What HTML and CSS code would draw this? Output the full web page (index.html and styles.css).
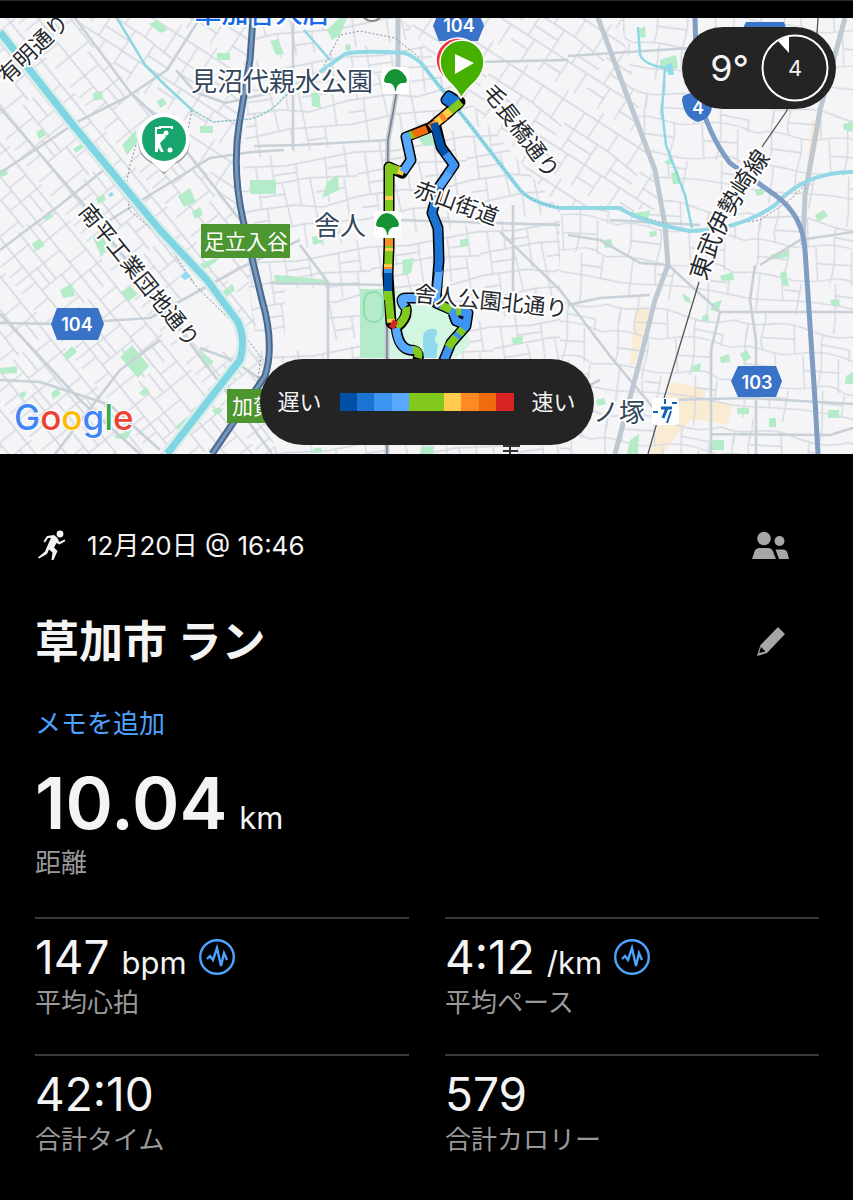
FILE: index.html
```html
<!DOCTYPE html>
<html lang="ja">
<head>
<meta charset="utf-8">
<meta name="viewport" content="width=device-width, initial-scale=1">
<title>草加市 ラン</title>
<link rel="stylesheet" href="styles.css">
</head>
<body>
<main class="activity">
  <section class="map" aria-label="ルートマップ">
    <svg class="map-canvas" viewBox="0 18 853 436" preserveAspectRatio="xMidYMid slice">
      <defs>
        <pattern id="grid-west" width="96" height="84" patternUnits="userSpaceOnUse" patternTransform="rotate(51)">
          <path class="street" d="M0 6H96M0 27H96M0 48H60M60 41H96M0 66H96M8 6V27M24 0V48M40 27V84M56 6V27M60 27V66M74 0V41M88 41V84M16 48V84M30 66V84M50 66V84M70 66V84M0 36H24M40 56H60M74 16H96"/>
        </pattern>
        <pattern id="grid-mid" width="110" height="96" patternUnits="userSpaceOnUse" patternTransform="rotate(-8)">
          <path class="street" d="M0 8L40 12L110 8M0 30L60 27L110 32M0 52H44L70 58L110 52M0 76L50 72L110 76M10 8V52M26 0V30M34 30L38 72M50 12V52M62 27L66 96M80 8L78 54M96 32V76M16 52V96M50 72V96M84 74V96M100 0V32M10 40H36M66 42H96M0 64H16M66 86H84M26 20H50M80 20H100"/>
        </pattern>
        <pattern id="grid-diag" width="90" height="78" patternUnits="userSpaceOnUse" patternTransform="rotate(33)">
          <path class="street" d="M0 10H90M0 30H52L90 34M0 54H90M12 10V54M28 0V30M40 30V78M52 10V30M64 32V54M76 0V34M20 54V78M60 54V78M82 54V78M12 42H40M64 44H90M0 66H20M40 68H60"/>
        </pattern>
        <pattern id="grid-east" width="128" height="108" patternUnits="userSpaceOnUse" patternTransform="rotate(7)">
          <path class="street" d="M0 12C30 20 40 4 70 12S110 18 128 12M0 40C24 30 40 46 66 38S110 36 128 40M0 72C34 66 50 80 84 70S110 76 128 72M0 96C30 100 60 88 128 96M14 15C10 40 20 50 14 70M30 0C34 16 24 26 32 38M44 40C50 60 38 70 46 96M60 10L64 38M72 38L78 72M90 16C86 30 96 40 90 72M108 38L112 72M100 0V14M20 70V108M62 76L60 108M96 72L100 108M118 74V96M14 54H46M76 54L110 52M30 26L62 24M90 26L118 28V40M46 84H62M98 84H118M14 28V15"/>
        </pattern>
        <clipPath id="area-west"><path d="M0 18H75L240 220L275 454H0Z"/></clipPath>
        <clipPath id="area-northwest"><path d="M75 18H253L236 215Z"/></clipPath>
        <clipPath id="area-mid"><path d="M253 18H400L560 210V454H270L240 215Z"/></clipPath>
        <clipPath id="area-north"><path d="M400 18H620L660 210H560Z"/></clipPath>
        <clipPath id="area-east"><path d="M620 18H853V454H560V210H660Z"/></clipPath>
        <path id="tobu-label" d="M693 288Q710 218 768 143"/>
      </defs>

      <rect class="land" y="18" width="853" height="436"/>
      <g class="town">
        <path d="M635 310L650 308L635 365L630 365ZM671 382L705 388V400L732 405L728 425L700 420L690 420L662 454H650ZM812 120L822 122L808 190L805 185Z"/>
      </g>
      <g clip-path="url(#area-west)"><rect fill="url(#grid-west)" y="18" width="300" height="436"/></g>
      <g clip-path="url(#area-northwest)"><rect fill="url(#grid-diag)" y="18" x="70" width="200" height="210"/></g>
      <g clip-path="url(#area-mid)"><rect fill="url(#grid-mid)" x="230" y="18" width="340" height="436"/></g>
      <g clip-path="url(#area-north)"><rect fill="url(#grid-diag)" x="400" y="18" width="270" height="200"/></g>
      <g clip-path="url(#area-east)"><rect fill="url(#grid-east)" x="550" y="18" width="303" height="436"/></g>

      <path class="land" d="M204 268Q235 290 236 330L232 355L205 345L172 320L180 300ZM285 288H328V350H285Z"/>

      <g class="park">
        <path d="M122 145L136 130L137 143L127 155ZM93 93L102 91L103 99L94 101ZM157 101L163 98L167 104L160 108ZM149 24L158 20L168 30L160 33ZM217 53H230V60H217ZM270 41L278 39L284 54L276 55ZM200 126H213V133H200ZM178 196L190 188L196 202L184 207ZM192 212L200 207L203 215L195 219ZM250 180H276V194H250ZM36 132L42 129L46 135L39 139ZM73 149L82 143L84 147L76 153ZM0 170L6 168L8 174L0 178ZM96 198L104 195L106 200L98 204ZM43 216L50 211L53 217L46 221ZM32 244L39 239L45 245L37 251ZM93 238L102 233L108 248L101 256ZM60 290L72 283L75 296L63 298ZM121 292L130 286L138 294L128 302ZM200 264L218 257L216 262L203 270ZM222 292L232 284L235 290L225 298ZM120 357L132 345L149 366L138 378ZM64 354L72 346L77 352L66 361ZM0 368L17 366V373L0 374ZM51 393L58 388L61 394L53 399ZM20 393L26 391L25 397L20 398ZM200 350L214 362L205 368ZM139 393L146 387L150 393L143 396ZM176 426L188 416L190 424L179 432ZM212 410L220 407L222 412L215 415ZM114 436L132 430L126 440L115 438Z"/>
        <path d="M327 30L339 18H347L340 35L332 40ZM345 45L350 44L351 50L346 51ZM311 93L319 92L321 108L312 106ZM327 182L338 175L339 190L322 198ZM402 260L414 258L411 273L403 275ZM285 244H290V258H284ZM274 275L290 276L327 280V285H276ZM312 237L321 235L322 243L313 245ZM418 138L430 133L436 145L424 146ZM460 240L468 238L468 246L460 247ZM511 338L523 336L522 344L513 344ZM421 447L434 446L433 454H420ZM313 449L321 447L322 452L314 453Z"/>
        <path d="M660 60L676 55L678 68L668 72L660 66ZM638 30L645 26L646 37L641 38ZM671 173L678 171L680 184L673 184ZM664 162L671 158L673 164L667 165ZM632 213L650 211L648 218L636 217ZM815 215L824 210L828 216L818 222ZM843 124L853 122V131L844 130ZM755 190L762 188L764 194L757 196ZM603 240L611 239L613 247L605 248ZM649 232L656 231L657 236L650 237ZM682 293L690 298L691 304L684 300ZM713 303L722 300L718 312L710 310ZM720 276L733 272L734 280L722 281ZM770 255L788 250L788 257L772 259ZM780 273L786 270L789 287L782 285ZM702 316L708 314L709 321L702 321ZM720 357L729 354L730 362L721 363ZM740 354L747 350L751 358L744 362ZM692 366L701 363L700 371L692 372ZM737 408H749V414H737ZM769 418H776V427H769ZM828 410H839V418H828ZM712 440H724V450H712ZM630 440L639 434L638 454H627ZM830 300L839 299L840 305L832 306ZM846 376L853 372V384L845 384ZM596 400L604 398L606 404L597 406Z"/>
        <path d="M360 289H388V358H360Z"/>
      </g>
      <path class="park-light" d="M388 290H400L404 300L418 298L440 306L452 312L466 320L470 345L455 358H388Z"/>
      <rect class="track" x="364" y="292" width="19" height="30" rx="9"/>
      <path class="pond" d="M423 342Q422 330 430 329Q438 328 437 334Q432 340 438 345L436 358H424Z"/>

      <path class="road" d="M0 173L77 122L127 97L167 70L200 18M110 220L150 195L210 158L252 152L284 150M75 18L130 92L170 130L240 220M0 108L80 200L150 290L240 410L272 454M0 314L80 400L140 454M0 323L60 324L150 318L240 268L300 240M0 250L60 205L110 165M0 380L40 382L110 405L160 450M55 454L120 370L160 340M200 348L232 360L262 380M190 18L270 20M176 70L195 92L225 103L284 90M270 283L388 285M328 285V360M254 146L300 145L388 140M293 18V150M300 245L330 285M400 220L560 225M500 232L560 290L610 356L655 410M568 56L690 48M480 62L568 60M513 205V300M598 18L640 130L655 170L665 225M568 235L600 240L640 263L668 265L720 312H853M568 305L600 298L650 295M720 312L711 350V454M755 265L750 300L756 340V454M668 400L750 398L853 404M711 434L830 435L853 428M610 220L700 225M760 265L800 240L853 232M540 420L580 390L600 380"/>
      <path class="road-wide" d="M845 18L820 110L805 195L803 245M598 18L640 130L655 170L665 225L668 265L655 300L640 360L615 454M398 18V90"/>
      <path class="boundary" d="M192 110L188 130M136 145L130 165L127 180L129 210L165 240L195 285L240 330L261 357L255 400M324 66L340 35L360 31L395 38L420 58M560 207L615 209L690 231L760 220L790 200L810 180"/>

      <path class="river-bank" d="M0 32L73 125L160 230L207 280L238 322Q246 340 240 360L167 454"/>
      <path class="river" d="M0 32L73 125L160 230L207 280L238 322Q246 340 240 360L167 454"/>
      <path class="river-mid" d="M320 72L345 54Q360 50 405 53Q418 58 425 68L470 125L520 190Q532 203 560 208H620Q640 222 690 231Q740 230 775 205Q805 172 853 172"/>
      <path class="stream" d="M117 18L145 65L165 85L192 110M638 27L640 55Q645 65 665 68L662 110L666 145L685 195L692 228M304 30L330 60"/>
      <path class="canal" d="M192 110L213 122L250 119Q270 114 284 97L320 72"/>
      <path class="river-dots" d="M425 68L470 125L520 190Q532 203 560 208"/>
      <path class="pond" d="M664 66L672 63L674 75L669 75ZM181 277L186 271L191 276L185 280ZM108 194L112 192L114 195L110 197Z"/>

      <path class="rail-bed" d="M397 90L388 140L387 220V454"/>
      <path class="rail-core" d="M397 90L388 140L387 220V454"/>
      <path class="highway" d="M253 18L250 60L239 125Q232 170 243 220L262 300Q275 345 265 376L212 454"/>
      <path class="highway-core" d="M253 18L250 60L239 125Q232 170 243 220L262 300Q275 345 265 376L212 454"/>
      <path class="route4" d="M695 18L697 90Q708 135 730 163L775 195Q803 215 805 250L815 400L818 454"/>
      <path class="railway" d="M818 18L816 48L786 112L762 147M699 282L665 395L648 454"/>

      <path class="boundary-dark" d="M503 446H520M503 451H518M510 446V454"/>

      <g class="track-line">
        <path class="track-edge" d="M460 102L456 106L446 100L449 96L459 102L449 112L431 127L406 137L411 160L402 173L389 167V245L388 275L391 323L397 327Q408 318 406 308Q398 298 406 298L438 298M436 127L441 147L454 165L439 187L432 213L438 228L439 260L436 298M436 303L452 310L468 313L466 326L451 343L444 360M452 310L456 321L466 325M396 326Q398 348 410 350Q420 350 418 360"/>
        <path class="pace-2" d="M460 102L454 105L446 100L449 96L458 102"/>
        <path class="pace-5" d="M461 102L448 113M396 170L389 167V245L388 275V300M388 290L391 323M396 327Q408 318 406 307"/>
        <path class="pace-7" d="M450 111L436 123M404 172L394 169"/>
        <path class="pace-8" d="M445 116L441 119M437 123L430 128"/>
        <path class="pace-9" d="M427 129L412 135"/>
        <path class="pace-5" d="M413 134L409 136M398 171L393 169"/>
        <path class="pace-4" d="M410 136L406 137L411 160L403 172"/>
        <path class="pace-7" d="M389 196V200M389 248V251M388 264V267M391 319V322"/>
        <path class="pace-8" d="M389 239V246M388 267V269"/>
        <path class="pace-1" d="M388 273L388 291M434 123L441 147L447 156"/>
        <path class="pace-3" d="M388 269V273M446 154L454 165L448 174"/>
        <path class="pace-4" d="M449 173L439 187M439 270L436 298H406Q398 298 405 307M396 328Q398 348 410 350H414"/>
        <path class="pace-2" d="M439 187L432 213L438 228L439 260L438 272"/>
        <path class="pace-10" d="M391 323L396 326"/>
        <path class="pace-3" d="M436 303L452 310L468 313L466 326L451 343L444 360M452 310L456 321L466 325"/>
        <path class="pace-5" d="M441 305L451 310M456 311H461M463 329L459 334M456 337L448 347M413 350Q420 350 418 358"/>
      </g>

      <g class="station">
        <rect x="382" y="67" width="27" height="27" rx="4"/><rect x="374" y="211" width="27" height="27" rx="4"/>
        <path id="ginkgo" d="M384 80Q386 70 395 69Q404 70 407 80Q407 83 404 83Q397 82 396 91H395Q394 82 387 83Q384 83 384 80Z"/>
        <use href="#ginkgo" x="-8" y="144"/>
      </g>

      <g class="halo-text street-name">
        <text transform="translate(32 47) rotate(-44)">有明通り</text>
        <text transform="translate(141 274) rotate(51)">南平工業団地通り</text>
        <text transform="translate(523 130) rotate(53)">毛長橋通り</text>
        <text transform="translate(457 201) rotate(20)">赤山街道</text>
        <text transform="translate(491 299) rotate(6)">舎人公園北通り</text>
        <text class="line-name"><textPath href="#tobu-label" startOffset="50%">東武伊勢崎線</textPath></text>
      </g>
      <g class="halo-text place-name">
        <text x="282" y="79">見沼代親水公園</text>
        <text x="340" y="223">舎人</text>
        <text x="619" y="410">ノ塚</text>
        <text class="shop" x="262" y="11">草加舎人店</text>
      </g>
      <circle class="poi-edge" cx="372" cy="10" r="11"/>

      <rect class="exit-sign" x="201" y="224" width="89" height="34"/>
      <rect class="exit-sign" x="227" y="389" width="60" height="34"/>
      <g class="exit-text"><text x="246" y="240">足立入谷</text><text x="253" y="405">加賀</text></g>

      <g class="shield">
        <path d="M57 308H98L104 324L98 340H57L51 324ZM738 366H776L782 381L776 397H738L731 381ZM439 11H478L484 26L478 41H439L433 26ZM744 26L746 22H784L786 28V40H744ZM683 96Q698 88 712 100Q714 118 698 122Q684 118 682 100Z"/>
        <text x="77" y="324">104</text><text x="757" y="382">103</text><text x="459" y="25">104</text><text x="698" y="107">4</text>
      </g>

      <g class="poi">
        <path class="poi-shadow" d="M164 174L153 164Q138 157 138 141A26 26 0 0 1 190 141Q190 157 175 164Z"/>
        <path class="poi-body" d="M164 172Q161 172 152 162Q138 154 138 139A26 26 0 0 1 190 139Q190 154 176 162Q167 172 164 172Z"/>
        <circle cx="164" cy="139" r="22"/>
        <path class="poi-line" d="M156 136V128H160V127H172V129M157 152V142L163 152"/>
        <path class="poi-fill" d="M155 134L164 134L166 137L160 143L163 152H161L157 146V152H155Z"/>
        <circle class="poi-fill" cx="166" cy="133" r="2.500"/><circle class="poi-fill" cx="170" cy="150" r="2.500"/>
      </g>

      <g class="tobu">
        <rect x="652" y="398" width="27" height="27" rx="4"/>
        <path d="M653 412H658M665 399V404M672 403H677M671 411L667 423"/>
        <path class="tobu-stem" d="M661 408H672M667 408L663 418"/>
      </g>

      <g class="pins">
        <path class="pin-end" d="M459 96Q456 88 446 80Q436 71 436 60A22 22 0 0 1 480 60Q480 71 471 80Q461 88 459 96Z"/>
        <path class="pin-start" d="M461 98Q458 90 448 81Q440 72 440 62A22 22 0 0 1 484 62Q484 72 476 81Q466 90 461 98Z"/>
        <path class="pin-play" d="M455 54L474 63L455 74Z"/>
      </g>

      <text class="google" x="14" y="430"><tspan class="g-blue">G</tspan><tspan class="g-red">o</tspan><tspan class="g-yellow">o</tspan><tspan class="g-blue">g</tspan><tspan class="g-green">l</tspan><tspan class="g-red">e</tspan></text>
    </svg>

    <div class="weather">
      <span class="temperature">9°</span>
      <span class="wind">
        <svg class="wind-dial" viewBox="0 0 68 68" aria-hidden="true"><circle cx="34" cy="34" r="32.500"/><path d="M17 7L28 2L28 19Z"/></svg>
        <span class="wind-speed">4</span>
      </span>
    </div>

    <div class="legend">
      <span>遅い</span>
      <span class="scale" aria-hidden="true"><i class="s1"></i><i class="s2"></i><i class="s3"></i><i class="s4"></i><i class="s5"></i><i class="s5"></i><i class="s7"></i><i class="s8"></i><i class="s9"></i><i class="s10"></i></span>
      <span>速い</span>
    </div>
  </section>

  <section class="details">
    <div class="row meta">
      <svg class="run-icon" viewBox="-2 0 32 32" aria-hidden="true">
        <circle cx="23" cy="4" r="3.400"/>
        <path d="M10 6L17 5L20 7.500L22.500 12L27.500 9.500L28.500 11L22.500 14.500L19.500 13L17 17.500L20.500 21L16.500 30H14.500L15.500 22.500L12 19.500L10 24L2 28.500L1 27.500L8 21.500L12.500 11L14 8L11 8L8 12.500L6.500 11.500Z"/>
      </svg>
      <time class="date" datetime="12-20T16:46">12月20日 @ 16:46</time>
      <button class="icon-button" type="button" aria-label="公開範囲">
        <svg class="people-icon" viewBox="0 0 38 30" aria-hidden="true"><circle cx="12" cy="7.500" r="6.800"/><circle cx="27.500" cy="10" r="5"/><path d="M0 28L2.500 20.500Q3.500 17 7.500 17H16Q20 17 21 20.500L24 28ZM23.500 18.500H31Q34.500 18.500 35.500 22L37 28H27Z"/></svg>
      </button>
    </div>
    <div class="row heading">
      <h1 class="title">草加市 ラン</h1>
      <button class="icon-button" type="button" aria-label="名前を編集">
        <svg class="pencil-icon" viewBox="0 0 30 30" aria-hidden="true"><path fill-rule="evenodd" d="M22 0L29 7L11 26L1 29L4.500 18ZM5 20L3.200 26L9.500 24.500Z"/></svg>
      </button>
    </div>
    <a class="memo" href="#memo">メモを追加</a>
    <div class="distance">
      <p class="value value-large">10.04 <span class="unit">km</span></p>
      <p class="label">距離</p>
    </div>
    <div class="stats">
      <div class="stat">
        <p class="value">147 <span class="unit">bpm</span>
          <svg class="sensor-icon" viewBox="0 0 36 36" aria-hidden="true"><circle cx="18" cy="18" r="16.800"/><path d="M8 20L11 17L14 21L18 9L22 27L25 14L28 21"/></svg></p>
        <p class="label">平均心拍</p>
      </div>
      <div class="stat">
        <p class="value">4:12 <span class="unit">/km</span>
          <svg class="sensor-icon" viewBox="0 0 36 36" aria-hidden="true"><circle cx="18" cy="18" r="16.800"/><path d="M8 20L11 17L14 21L18 9L22 27L25 14L28 21"/></svg></p>
        <p class="label">平均ペース</p>
      </div>
      <div class="stat">
        <p class="value">42:10</p>
        <p class="label">合計タイム</p>
      </div>
      <div class="stat">
        <p class="value">579</p>
        <p class="label">合計カロリー</p>
      </div>
    </div>
  </section>
</main>
</body>
</html>
```
FILE: styles.css
```css
* { box-sizing: border-box; }

body {
  margin: 0;
  background: #000;
  color: #f4f4f4;
  font-family: Inter, "Noto Sans CJK JP", sans-serif;
}

p, h1 { margin: 0; }

.activity {
  border-top: 1px solid #2c2c2e;
  padding-top: 17px;
}

/* Map */
.map { position: relative; overflow: hidden; }
.map-canvas { display: block; width: 100%; height: auto; }

.land { fill: #f5f4f6; }
.town { fill: #faecd2; }
.street { fill: none; stroke: #d2d8de; stroke-width: 1.3; }
.road { fill: none; stroke: #c8d0d8; stroke-width: 2.6; stroke-linejoin: round; }
.road-wide { fill: none; stroke: #bdc8d3; stroke-width: 5; stroke-linejoin: round; }
.boundary { fill: none; stroke: #8d8f98; stroke-width: 1; stroke-dasharray: 2 2; }
.boundary-dark { fill: none; stroke: #333; stroke-width: 2; }
.park { fill: #b4ecc9; }
.park-light { fill: #d2f6e2; }
.track { fill: none; stroke: #8fdcb0; stroke-width: 2; }
.pond { fill: #90daee; }
.river, .river-mid, .stream, .river-bank, .canal, .river-dots { fill: none; stroke-linejoin: round; }
.river-bank { stroke: #dceee9; stroke-width: 12; }
.river { stroke: #7fd5e4; stroke-width: 7; }
.river-mid { stroke: #93d8e6; stroke-width: 4; }
.stream { stroke: #8ed6e2; stroke-width: 2.5; }
.canal { stroke: #8fc6cf; stroke-width: 1.5; stroke-dasharray: 3 1; }
.river-dots { stroke: #65a9b5; stroke-width: 1; stroke-dasharray: 2 2; }
.rail-bed { fill: none; stroke: #c3cbd6; stroke-width: 5; }
.rail-core { fill: none; stroke: #777c86; stroke-width: 1.5; }
.highway { fill: none; stroke: #48688f; stroke-width: 7; }
.highway-core { fill: none; stroke: #7797bb; stroke-width: 3; }
.route4 { fill: none; stroke: #7f9cc2; stroke-width: 5; }
.railway { fill: none; stroke: #555; stroke-width: 1.3; }

.track-line path { fill: none; stroke-width: 8; stroke-linejoin: round; }
.track-line .track-edge { stroke: #000; stroke-width: 11; stroke-linecap: round; }
.pace-1 { stroke: #0050a5; }
.pace-2 { stroke: #1c75d4; }
.pace-3 { stroke: #3d94f2; }
.pace-4 { stroke: #59a8ff; }
.pace-5 { stroke: #82c91e; }
.pace-7 { stroke: #ffcc4d; }
.pace-8 { stroke: #ff8a24; }
.pace-9 { stroke: #ee6c0c; }
.pace-10 { stroke: #d92222; }

.station rect, .tobu rect { fill: #fff; }
.station path, .station use { fill: #159335; }
.tobu path { fill: none; stroke: #1360b0; stroke-width: 2; }
.tobu .tobu-stem { stroke-width: 3; }

.halo-text, .exit-text, .shield text {
  font-family: "Noto Sans CJK JP", sans-serif;
  text-anchor: middle;
  dominant-baseline: central;
}
.halo-text { stroke: #fff; stroke-width: 4px; stroke-linejoin: round; paint-order: stroke; }
.street-name { font-size: 22px; fill: #25282d; }
.line-name { font-size: 24px; }
.place-name { font-size: 26px; fill: #34475c; }
.place-name .shop { fill: #1769e8; font-size: 27px; font-weight: 500; }
.poi-edge { fill: #fff; stroke: #888; stroke-width: 2; }
.exit-sign { fill: #4d952e; }
.exit-text { font-size: 21px; fill: #fff; }
.shield path { fill: #3973c8; }
.shield text { font-family: Inter, sans-serif; font-size: 18px; font-weight: 600; fill: #fff; }

.poi-shadow { fill: #999; }
.poi-body, .poi-fill { fill: #fff; }
.poi circle { fill: #18a56d; }
.poi .poi-fill { fill: #fff; }
.poi-line { fill: none; stroke: #fff; stroke-width: 2; }

.pin-end { fill: #ef3340; stroke: #fff; stroke-width: 1.5; }
.pin-start { fill: #46b000; stroke: #fff; stroke-width: 1.5; }
.pin-play { fill: #fff; }

.google {
  font-family: Inter, sans-serif;
  font-size: 35px;
  font-weight: 500;
  stroke: #fff;
  stroke-width: 2px;
  paint-order: stroke;
}
.g-blue { fill: #4285f4; }
.g-red { fill: #ea4335; }
.g-yellow { fill: #fbbc05; }
.g-green { fill: #34a853; }

.weather {
  position: absolute;
  top: 9px;
  right: 17px;
  display: flex;
  align-items: center;
  gap: 12px;
  padding: 7px 7px 7px 28px;
  border-radius: 41px;
  background: #242424;
}
.temperature { font-size: 36px; line-height: 40px; }
.wind { display: grid; place-items: center; }
.wind > * { grid-area: 1 / 1; }
.wind-dial { width: 68px; height: 68px; fill: none; stroke: #fff; stroke-width: 2; }
.wind-dial path { fill: #fff; stroke: none; }
.wind-speed { font-size: 22px; }

.legend {
  position: absolute;
  bottom: 9px;
  left: 50%;
  transform: translateX(-50%);
  display: flex;
  align-items: center;
  gap: 18px;
  padding: 25px 18px;
  border-radius: 43px;
  background: #242424;
  font-size: 22px;
  line-height: 36px;
  white-space: nowrap;
}
.scale { display: flex; width: 174px; height: 18px; }
.scale i { flex: 1; }
.s1 { background: #0050a5; }
.s2 { background: #1c75d4; }
.s3 { background: #3d94f2; }
.s4 { background: #59a8ff; }
.s5 { background: #82c91e; }
.s7 { background: #ffcc4d; }
.s8 { background: #ff8a24; }
.s9 { background: #ee6c0c; }
.s10 { background: #d92222; }

/* Details */
.details { padding: 72px 34px 36px 35px; }
.row { display: flex; align-items: center; }
.meta { height: 40px; gap: 20px; }
.run-icon { width: 32px; height: 32px; fill: #f4f4f4; }
.date { font-size: 26px; line-height: 36px; }
.icon-button {
  display: grid;
  place-items: center;
  width: 96px;
  height: 40px;
  margin-left: auto;
  padding: 0;
  border: 0;
  background: none;
  fill: #a6a6a6;
}
.people-icon { width: 38px; height: 30px; }
.pencil-icon { width: 30px; height: 30px; }
.heading { margin-top: 46px; height: 60px; }
.title { font-size: 44px; font-weight: 700; line-height: 60px; }
.memo {
  display: inline-block;
  margin-top: 32px;
  color: #4da3ff;
  font-size: 26px;
  line-height: 40px;
  text-decoration: none;
}
.distance { margin-top: 19px; }
.value {
  display: flex;
  align-items: baseline;
  gap: 12px;
  height: 52px;
  font-size: 46px;
  line-height: 52px;
  white-space: nowrap;
}
.value-large { height: 80px; font-size: 72px; font-weight: 600; line-height: 80px; }
.unit { font-size: 31px; font-weight: 400; }
.label { margin-top: 4px; color: #999; font-size: 26px; line-height: 32px; }
.stats {
  display: grid;
  grid-template-columns: 1fr 1fr;
  column-gap: 36px;
  margin-top: 38px;
}
.stat { border-top: 2px solid #3a3a3a; padding: 12px 0 35px; }
.sensor-icon {
  align-self: center;
  width: 36px;
  height: 36px;
  fill: none;
  stroke: #4da3ff;
  stroke-width: 2.4;
}
```
